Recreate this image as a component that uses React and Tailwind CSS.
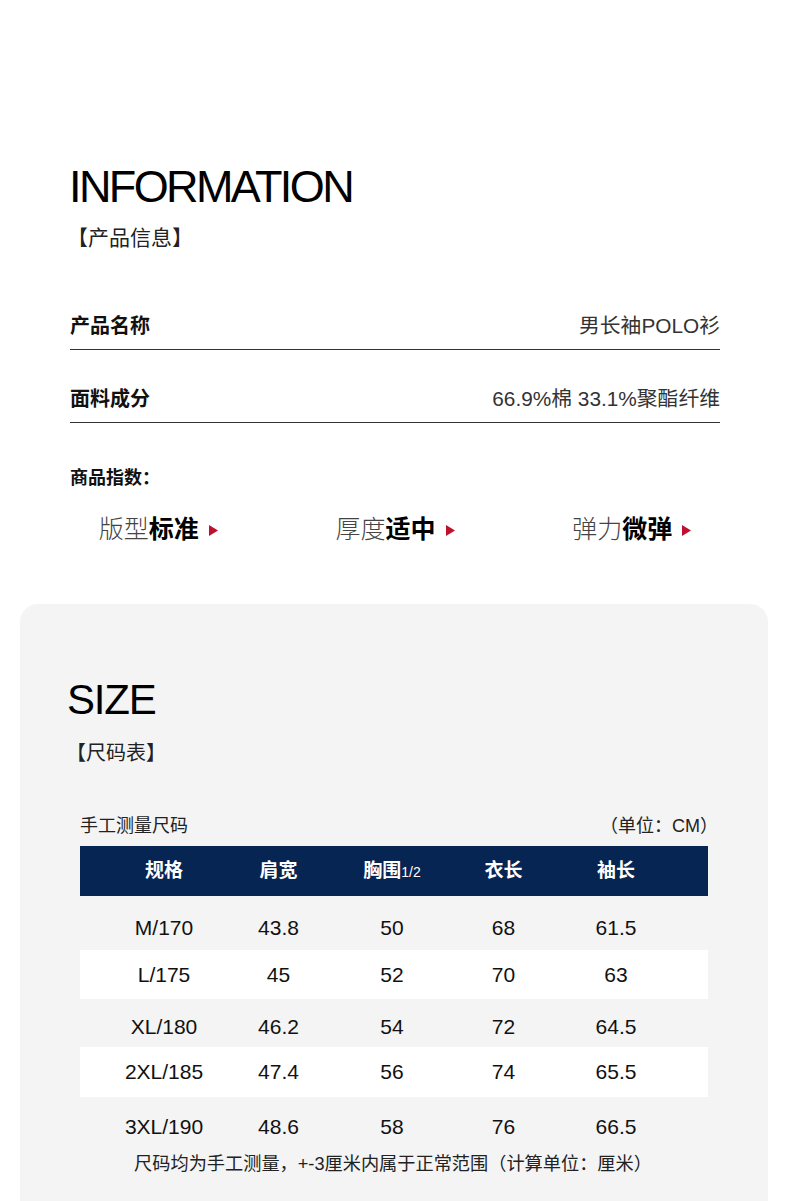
const FONT = "font-['Liberation_Sans','Noto_Sans_CJK_SC',sans-serif]";

const specs = [
  { label: "产品名称", value: "男长袖POLO衫" },
  { label: "面料成分", value: "66.9%棉 33.1%聚酯纤维" },
];

const indices = [
  { a: "版型", b: "标准" },
  { a: "厚度", b: "适中" },
  { a: "弹力", b: "微弹" },
];

const rows = [
  { cells: ["M/170", "43.8", "50", "68", "61.5"], cls: "h-[54px] pt-[10px]" },
  { cells: ["L/175", "45", "52", "70", "63"], cls: "h-[49px] bg-white" },
  { cells: ["XL/180", "46.2", "54", "72", "64.5"], cls: "h-[48px] pt-[8px]" },
  { cells: ["2XL/185", "47.4", "56", "74", "65.5"], cls: "h-[50px] bg-white" },
  { cells: ["3XL/190", "48.6", "58", "76", "66.5"], cls: "h-[60px]" },
];

const COLS = "grid grid-cols-[114px_115px_112px_111px_114px] pl-[27px]";

const Arrow = () => (
  <svg width="9" height="11" viewBox="0 0 9 11" className="ml-[10px] mt-[2px]">
    <polygon points="0,0 9,5.5 0,11" fill="#c0102f" />
  </svg>
);

export default function App() {
  return (
    <div className={`w-[790px] h-[1201px] overflow-hidden bg-white text-[#111] ${FONT}`}>
      {/* Information */}
      <section className="px-[70px] pt-[164px]">
        <h1 className="text-[45px] leading-none tracking-[-2.6px] -ml-[1px] text-black">INFORMATION</h1>
        <p className="mt-[17px] -ml-[3px] text-[21px] leading-[24px] text-[#222]">【产品信息】</p>

        <div className="mt-[64px]">
          {specs.map((s, i) => (
            <div
              key={s.label}
              className={`flex items-center justify-between border-b border-[#333] pb-[11px] ${i ? "mt-[37px]" : ""}`}
            >
              <span className="text-[20px] leading-[24px] font-bold">{s.label}</span>
              <span className="text-[20.8px] leading-[24px] text-[#333]">{s.value}</span>
            </div>
          ))}
        </div>

        <p className="mt-[44px] text-[18px] leading-[22px] font-bold">商品指数：</p>

        <div className="grid grid-cols-3 -mx-[30px] mt-[26px]">
          {indices.map((x) => (
            <div key={x.a} className="flex items-center justify-center">
              <span className="text-[25px] leading-[28px] font-light text-[#444]">{x.a}</span>
              <span className="text-[25px] leading-[28px] font-bold text-black">{x.b}</span>
              <Arrow />
            </div>
          ))}
        </div>
      </section>

      {/* Size */}
      <section className="mt-[61px] ml-[20px] w-[748px] h-[640px] rounded-[18px] bg-[#f4f4f4] pt-[75px]">
        <h2 className="pl-[47px] text-[42px] leading-none tracking-[-1.2px] text-black">SIZE</h2>
        <p className="mt-[20px] pl-[46px] text-[20px] leading-[24px] text-[#222]">【尺码表】</p>

        <div className="mx-[60px] mt-[51px]">
          <div className="flex justify-between items-center text-[18px] leading-[20px] text-[#222]">
            <span>手工测量尺码</span>
            <span className="-mr-[10px]">（单位：CM）</span>
          </div>

          <div className={`${COLS} mt-[10px] h-[50px] items-center bg-[#072552] text-white`}>
            <span className="text-center text-[19px] font-bold">规格</span>
            <span className="text-center text-[19px] font-bold">肩宽</span>
            <span className="text-center text-[19px] font-bold">
              胸围<span className="text-[14px] font-normal">1/2</span>
            </span>
            <span className="text-center text-[19px] font-bold">衣长</span>
            <span className="text-center text-[19px] font-bold">袖长</span>
          </div>

          {rows.map((r) => (
            <div key={r.cells[0]} className={`${COLS} items-center text-[21px] text-[#111] ${r.cls}`}>
              {r.cells.map((c, i) => (
                <span key={i} className="text-center">{c}</span>
              ))}
            </div>
          ))}

          <p className="mt-[-4px] -ml-[2px] text-center text-[18.2px] leading-[22px] text-[#222]">
            尺码均为手工测量，+-3厘米内属于正常范围（计算单位：厘米）
          </p>
        </div>
      </section>
    </div>
  );
}
